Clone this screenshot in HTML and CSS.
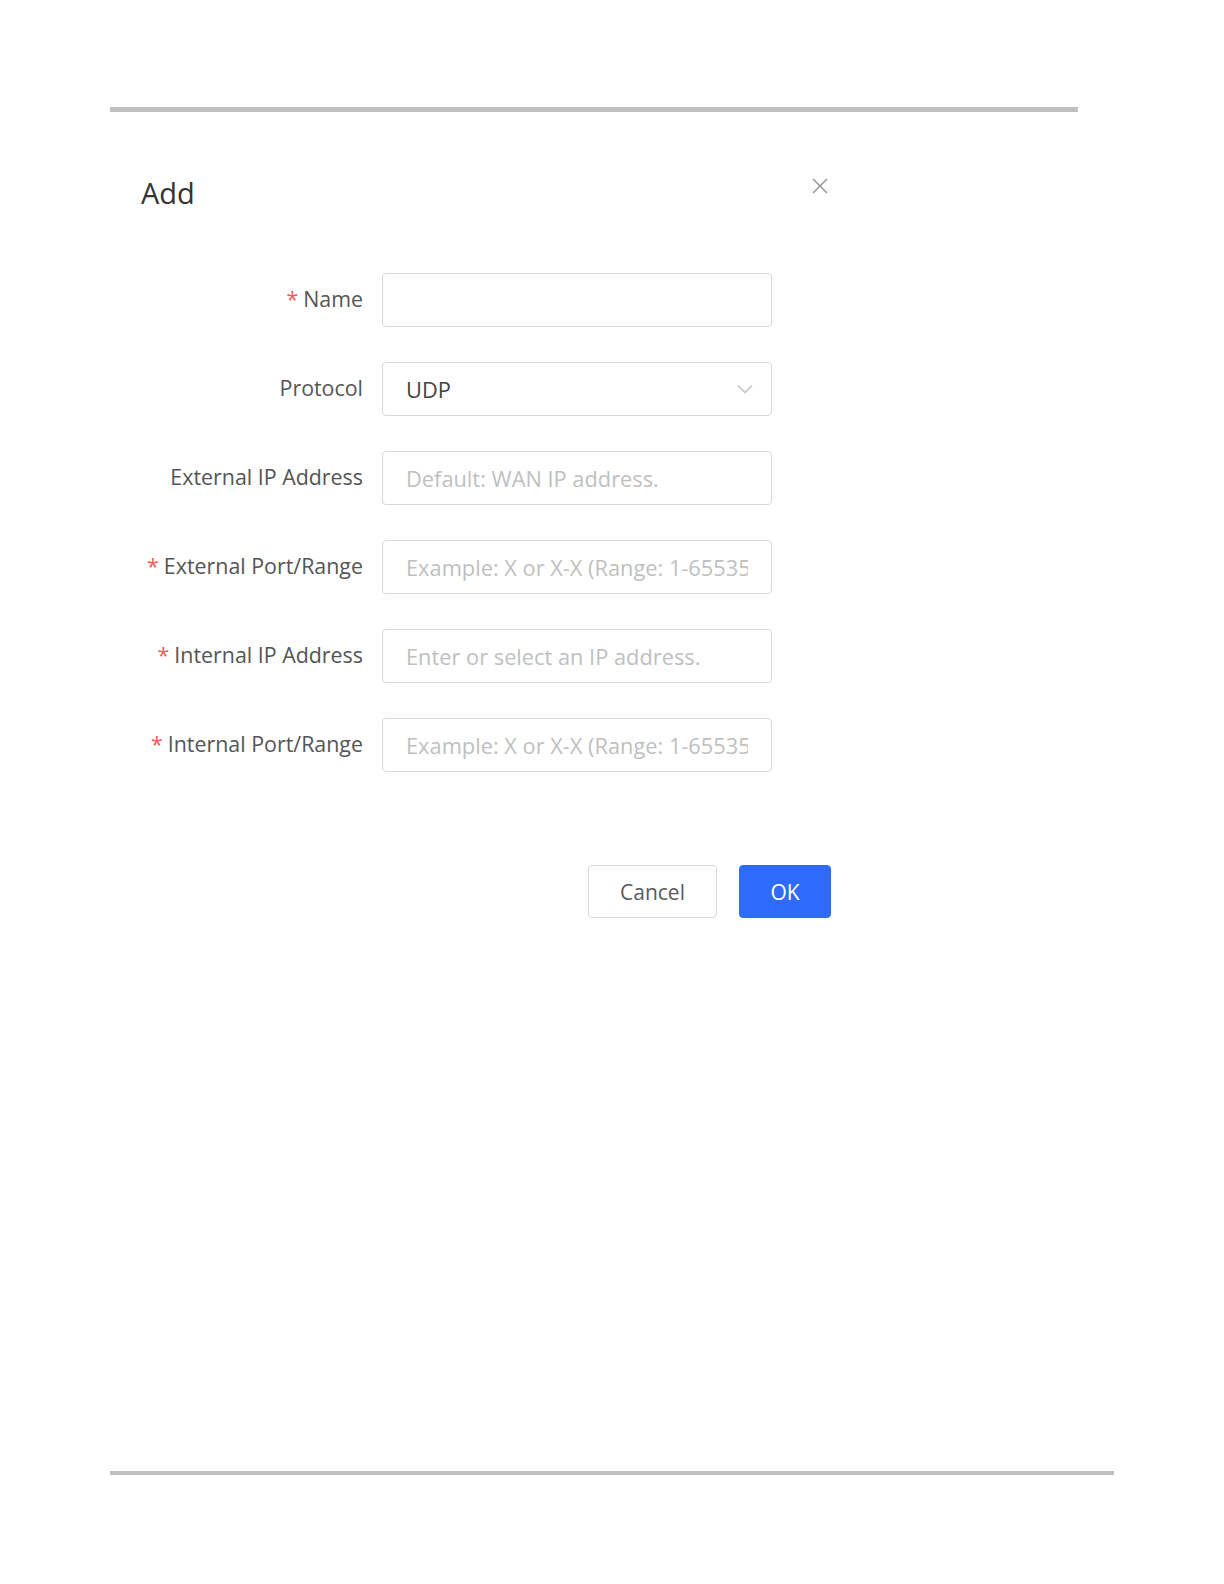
FILE: index.html
```html
<!DOCTYPE html>
<html lang="en">
<head>
<meta charset="utf-8">
<title>Add</title>
<link rel="stylesheet" href="styles.css">
</head>
<body>
<div class="page">
  <div class="rule rule-top"></div>
  <div class="dialog">
    <div class="dialog-header">
      <h1 class="dialog-title">Add</h1>
      <span class="close" aria-label="Close">
        <svg width="18" height="18" viewBox="0 0 18 18"><path d="M2 2 L16 16 M16 2 L2 16" stroke="#8c8c8c" stroke-width="1.3" fill="none"/></svg>
      </span>
    </div>
    <form class="form">
      <div class="row">
        <label class="label"><span class="req">*</span>Name</label>
        <input class="field" type="text">
      </div>
      <div class="row">
        <label class="label">Protocol</label>
        <div class="field select">
          <span class="select-value">UDP</span>
          <svg class="chevron" width="16" height="10" viewBox="0 0 16 10"><path d="M1 1.5 L8 8.5 L15 1.5" stroke="#bfbfbf" stroke-width="1.3" fill="none"/></svg>
        </div>
      </div>
      <div class="row">
        <label class="label">External IP Address</label>
        <input class="field" type="text" placeholder="Default: WAN IP address.">
      </div>
      <div class="row">
        <label class="label"><span class="req">*</span>External Port/Range</label>
        <input class="field" type="text" placeholder="Example: X or X-X (Range: 1-65535)">
      </div>
      <div class="row">
        <label class="label"><span class="req">*</span>Internal IP Address</label>
        <input class="field" type="text" placeholder="Enter or select an IP address.">
      </div>
      <div class="row">
        <label class="label"><span class="req">*</span>Internal Port/Range</label>
        <input class="field" type="text" placeholder="Example: X or X-X (Range: 1-65535)">
      </div>
    </form>
    <div class="actions">
      <button class="btn btn-default" type="button">Cancel</button>
      <button class="btn btn-primary" type="button">OK</button>
    </div>
  </div>
  <div class="spacer"></div>
  <div class="rule rule-bottom"></div>
</div>
</body>
</html>
```

FILE: styles.css
```css
html, body {
  margin: 0;
  padding: 0;
  background: #ffffff;
}
body {
  font-family: "Open Sans", "Noto Sans", Arial, sans-serif;
  color: #555555;
}
.page {
  width: 1224px;
  height: 1584px;
  display: flex;
  flex-direction: column;
}
.rule {
  background: #c0c0c0;
  margin-left: 110px;
}
.rule-top {
  margin-top: 107px;
  width: 968px;
  height: 5px;
}
.rule-bottom {
  width: 1004px;
  height: 4px;
  margin-bottom: 109px;
}
.spacer {
  flex: 1;
}
.dialog {
  margin-left: 141px;
  width: 690px;
  display: flex;
  flex-direction: column;
}
.dialog-header {
  display: flex;
  justify-content: space-between;
  align-items: flex-start;
  margin-top: 63px;
  padding-right: 2px;
}
.dialog-title {
  margin: 0;
  font-size: 29px;
  font-weight: 400;
  line-height: 36px;
  color: #333333;
}
.close {
  display: flex;
  margin-top: 2px;
}
.form {
  display: flex;
  flex-direction: column;
  gap: 35px;
  margin-top: 62px;
}
.row {
  display: flex;
  align-items: center;
  gap: 19px;
}
.label {
  width: 222px;
  text-align: right;
  font-size: 21.4px;
  line-height: 28px;
  margin-top: -3px;
  color: #555555;
  white-space: nowrap;
}
.req {
  color: #f25a5a;
  margin-right: 5px;
}
.field {
  box-sizing: border-box;
  width: 390px;
  height: 54px;
  border: 1px solid #d9d9d9;
  border-radius: 4px;
  padding: 0 23px;
  font-family: inherit;
  font-size: 21.8px;
  color: #444444;
  background: #ffffff;
  outline: none;
}
.field::placeholder {
  color: #bfbfbf;
}
.select {
  display: flex;
  align-items: center;
  justify-content: space-between;
  padding-right: 18px;
}
.actions {
  display: flex;
  justify-content: flex-end;
  gap: 22px;
  margin-top: 93px;
}
.btn {
  height: 53px;
  border-radius: 4px;
  font-family: inherit;
  font-size: 21px;
  cursor: pointer;
}
.btn-default {
  width: 129px;
  background: #ffffff;
  border: 1px solid #d9d9d9;
  color: #595959;
}
.btn-primary {
  width: 92px;
  background: #2f6bfb;
  border: 1px solid #2f6bfb;
  color: #ffffff;
}
```
